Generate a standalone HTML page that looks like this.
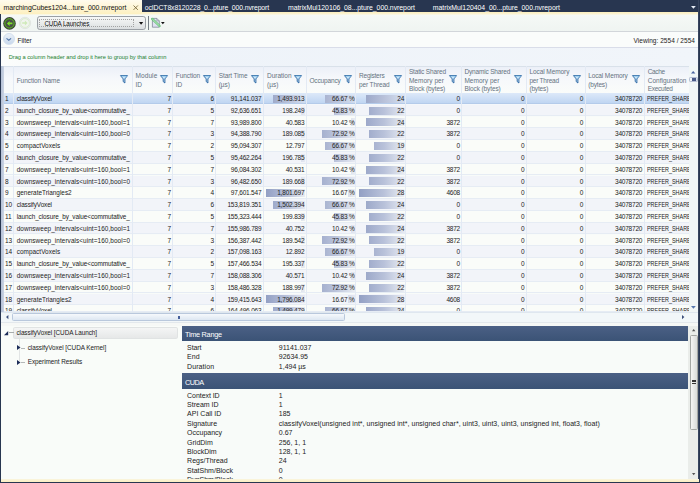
<!DOCTYPE html>
<html><head><meta charset="utf-8"><title>nvreport</title>
<style>
html,body{margin:0;padding:0;}
body{width:700px;height:483px;overflow:hidden;position:relative;background:#f8fbf9;font-family:"Liberation Sans",sans-serif;font-size:6.5px;color:#222;}
div{position:absolute;box-sizing:border-box;white-space:nowrap;}
.t{line-height:10px;height:10px;}
.row{overflow:hidden;}
.row div{top:0;height:11.8px;line-height:11.6px;}
.row .bar{height:8px;top:1.9px;background-image:linear-gradient(90deg,#93a0c4,#b9c2da 55%,rgba(222,227,238,0.55));background-repeat:no-repeat;background-position:right top;}
.vl{top:66.4px;width:0.9px;background:#e3eaf4;}
svg{position:absolute;overflow:visible;}
#w{left:-4px;top:-4px;width:708px;height:491px;background:#283650;}
#c{left:4px;top:4px;width:700px;height:483px;background:#f8fbf9;}
</style></head><body><div id="w"><div id="c">

<div style="left:-4px;top:-4px;width:708px;height:16px;background:#283650"></div>
<div style="left:-4px;top:12px;width:702.7px;height:3px;background:linear-gradient(#fcefbc,#fbf3d2 60%,#f8f9ee)"></div>
<div style="left:-4px;top:-4px;width:145.7px;height:17.5px;background:linear-gradient(#fffbee 4px,#fdf0c0);border-radius:0 2px 0 0"></div>
<div class="t" style="top:2.90px;font-size:6.90px;color:#111;letter-spacing:-0.027px;left:3.60px;">marchingCubes1204...ture_000.nvreport</div>
<svg style="left:133px;top:4.9px" width="5.4" height="5.4" viewBox="0 0 5.4 5.4"><path d="M0.5 0.5L4.9 4.9M4.9 0.5L0.5 4.9" stroke="#7a693c" stroke-width="0.9" fill="none"/></svg>
<div class="t" style="top:2.90px;font-size:6.90px;color:#fff;letter-spacing:-0.128px;left:144.80px;">ocIDCT8x8120228_0...pture_000.nvreport</div>
<div class="t" style="top:2.90px;font-size:6.90px;color:#fff;letter-spacing:-0.038px;left:288.00px;">matrixMul120106_08...pture_000.nvreport</div>
<div class="t" style="top:2.90px;font-size:6.90px;color:#fff;letter-spacing:-0.033px;left:432.80px;">matrixMul120404_00...pture_000.nvreport</div>
<svg style="left:690.5px;top:6.1px" width="4.8" height="2.8" viewBox="0 0 4.8 2.8"><path d="M0 0H4.8L2.4 2.8Z" fill="#e8edf5"/></svg>
<div style="left:1.4px;top:14.6px;width:698px;height:17px;background:linear-gradient(#f5f9f6,#eff4f1)"></div>
<div style="left:1.4px;top:31px;width:698px;height:1px;background:#d2d6da"></div>
<svg style="left:3.4px;top:16.5px" width="13" height="13" viewBox="0 0 13 13"><circle cx="6.5" cy="6.4" r="6.3" fill="#3a3f3a"/><circle cx="6.5" cy="6.4" r="4.7" fill="#494e49" stroke="#5cc01c" stroke-width="1"/><path d="M3.9 6.4 L6.6 3.9 V5.5 H9.4 V7.3 H6.6 V8.9 Z" fill="#7ee02c"/></svg>
<svg style="left:18.5px;top:16.9px" width="12" height="12" viewBox="0 0 12 12"><circle cx="6" cy="6" r="5.7" fill="#e9ede9" stroke="#d9ded9" stroke-width="0.6"/><circle cx="6" cy="6" r="4.4" fill="#f1f4ef" stroke="#d8edc8" stroke-width="0.8"/><path d="M8.6 6 L5.9 3.6 V5.2 H3.2 V6.8 H5.9 V8.4 Z" fill="#cfeab8"/></svg>
<div style="left:37.2px;top:16.3px;width:109.2px;height:13.3px;border:0.8px solid #9a9fa4;border-radius:2.8px;background:linear-gradient(#f6f7f7,#eaecec 50%,#dbdee0)"></div>
<div style="left:39.4px;top:18.7px;width:94.3px;height:8.8px;border:0.6px dotted #a2a2a2"></div>
<div class="t" style="top:19.20px;font-size:6.30px;color:#111;letter-spacing:-0.137px;left:44.40px;">CUDA Launches</div>
<svg style="left:139.4px;top:22.2px" width="4.2" height="2.7" viewBox="0 0 4.2 2.7"><path d="M0 0H4.2L2.1 2.7Z" fill="#111"/></svg>
<div style="left:147.8px;top:15.9px;width:0.8px;height:13.7px;background:#757d84"></div>
<svg style="left:151.9px;top:18.4px" width="8" height="9.6" viewBox="0 0 8 9.6"><path d="M0.4 0.4H4.8L7.3 2.9V9.2H0.4Z" fill="#e0e0f2" stroke="#737d8c" stroke-width="0.7"/><path d="M4.8 0.4V2.9H7.3" fill="none" stroke="#737d8c" stroke-width="0.5"/><path d="M0.2 0.9 L7.6 8" stroke="#67c377" stroke-width="2.3" stroke-linecap="round"/><path d="M0.6 1.3 L7.2 7.6" stroke="#e4f6e6" stroke-width="0.7" stroke-linecap="round"/></svg>
<svg style="left:161px;top:21.9px" width="3.7" height="2.2" viewBox="0 0 3.7 2.2"><path d="M0 0H3.7L1.85 2.2Z" fill="#111"/></svg>
<div style="left:1.4px;top:32.2px;width:698px;height:15px;background:#fafcfb"></div>
<div style="left:1.4px;top:47px;width:698px;height:1px;background:#d9dde9"></div>
<div style="left:3.2px;top:33.3px;width:12px;height:12px;border-radius:6px;background:linear-gradient(#eaf1f9,#c8d8ec);border:0.6px solid #d3dfee"></div>
<svg style="left:6.1px;top:38.1px" width="5.6" height="2.8" viewBox="0 0 5.6 2.8"><path d="M0.5 0.4L2.8 2.3L5.1 0.4" fill="none" stroke="#5275a8" stroke-width="1.1"/></svg>
<div class="t" style="top:35.80px;font-size:6.50px;color:#222;letter-spacing:-0.032px;left:17.50px;">Filter</div>
<div class="t" style="top:35.80px;font-size:6.50px;color:#222;letter-spacing:0.045px;left:633.50px;">Viewing: 2554 / 2554</div>
<div style="left:1.4px;top:47.9px;width:698px;height:18.6px;background:linear-gradient(90deg,#fcfdfc 0,#f5f8fa 10%,#eef3f9 20%,#f1f5fa 100%)"></div>
<div class="t" style="top:52.30px;font-size:5.70px;color:#1a7f2e;letter-spacing:-0.017px;left:8.75px;">Drag a column header and drop it here to group by that column</div>
<div style="left:3.7px;top:66.4px;width:695.3px;height:26.5px;background:linear-gradient(#ecf0f8,#f6f8fb 45%,#fafcfa);border-top:0.8px solid #d9e1ea"></div>
<div class="t" style="top:76.20px;font-size:6.50px;color:#65727f;letter-spacing:-0.063px;left:16.70px;">Function Name</div>
<svg style="left:120.0px;top:74.8px" width="8" height="8.4" viewBox="0 0 8 8.4"><path d="M0.5 0.6H7.5L4.9 3.9V8L3.2 6.6V3.9Z" fill="#cfe7f8" stroke="#1f5f9e" stroke-width="0.9" stroke-linejoin="round"/><path d="M1.5 1.3H6.5L4.4 3.6" fill="none" stroke="#8cc6ec" stroke-width="0.7"/></svg>
<div class="t" style="top:70.80px;font-size:6.50px;color:#65727f;letter-spacing:0.114px;left:135.40px;">Module</div>
<div class="t" style="top:79.50px;font-size:6.50px;color:#65727f;left:135.40px;">ID</div>
<svg style="left:160.0px;top:74.8px" width="8" height="8.4" viewBox="0 0 8 8.4"><path d="M0.5 0.6H7.5L4.9 3.9V8L3.2 6.6V3.9Z" fill="#cfe7f8" stroke="#1f5f9e" stroke-width="0.9" stroke-linejoin="round"/><path d="M1.5 1.3H6.5L4.4 3.6" fill="none" stroke="#8cc6ec" stroke-width="0.7"/></svg>
<div class="t" style="top:70.80px;font-size:6.50px;color:#65727f;letter-spacing:-0.085px;left:175.80px;">Function</div>
<div class="t" style="top:79.50px;font-size:6.50px;color:#65727f;left:175.80px;">ID</div>
<svg style="left:203.0px;top:74.8px" width="8" height="8.4" viewBox="0 0 8 8.4"><path d="M0.5 0.6H7.5L4.9 3.9V8L3.2 6.6V3.9Z" fill="#cfe7f8" stroke="#1f5f9e" stroke-width="0.9" stroke-linejoin="round"/><path d="M1.5 1.3H6.5L4.4 3.6" fill="none" stroke="#8cc6ec" stroke-width="0.7"/></svg>
<div class="t" style="top:70.80px;font-size:6.50px;color:#65727f;letter-spacing:-0.087px;left:218.70px;">Start Time</div>
<div class="t" style="top:79.50px;font-size:6.50px;color:#65727f;left:218.70px;">(µs)</div>
<svg style="left:251.0px;top:74.8px" width="8" height="8.4" viewBox="0 0 8 8.4"><path d="M0.5 0.6H7.5L4.9 3.9V8L3.2 6.6V3.9Z" fill="#cfe7f8" stroke="#1f5f9e" stroke-width="0.9" stroke-linejoin="round"/><path d="M1.5 1.3H6.5L4.4 3.6" fill="none" stroke="#8cc6ec" stroke-width="0.7"/></svg>
<div class="t" style="top:70.80px;font-size:6.50px;color:#65727f;letter-spacing:-0.009px;left:267.00px;">Duration</div>
<div class="t" style="top:79.50px;font-size:6.50px;color:#65727f;left:267.00px;">(µs)</div>
<svg style="left:294.0px;top:74.8px" width="8" height="8.4" viewBox="0 0 8 8.4"><path d="M0.5 0.6H7.5L4.9 3.9V8L3.2 6.6V3.9Z" fill="#cfe7f8" stroke="#1f5f9e" stroke-width="0.9" stroke-linejoin="round"/><path d="M1.5 1.3H6.5L4.4 3.6" fill="none" stroke="#8cc6ec" stroke-width="0.7"/></svg>
<div class="t" style="top:76.20px;font-size:6.50px;color:#65727f;letter-spacing:-0.141px;left:309.40px;">Occupancy</div>
<svg style="left:343.5px;top:74.8px" width="8" height="8.4" viewBox="0 0 8 8.4"><path d="M0.5 0.6H7.5L4.9 3.9V8L3.2 6.6V3.9Z" fill="#cfe7f8" stroke="#1f5f9e" stroke-width="0.9" stroke-linejoin="round"/><path d="M1.5 1.3H6.5L4.4 3.6" fill="none" stroke="#8cc6ec" stroke-width="0.7"/></svg>
<div class="t" style="top:70.80px;font-size:6.50px;color:#65727f;letter-spacing:-0.217px;left:359.00px;">Registers</div>
<div class="t" style="top:79.50px;font-size:6.50px;color:#65727f;letter-spacing:-0.118px;left:359.00px;">per Thread</div>
<svg style="left:393.5px;top:74.8px" width="8" height="8.4" viewBox="0 0 8 8.4"><path d="M0.5 0.6H7.5L4.9 3.9V8L3.2 6.6V3.9Z" fill="#cfe7f8" stroke="#1f5f9e" stroke-width="0.9" stroke-linejoin="round"/><path d="M1.5 1.3H6.5L4.4 3.6" fill="none" stroke="#8cc6ec" stroke-width="0.7"/></svg>
<div class="t" style="top:66.90px;font-size:6.50px;color:#65727f;letter-spacing:-0.156px;left:408.90px;">Static Shared</div>
<div class="t" style="top:75.90px;font-size:6.50px;color:#65727f;letter-spacing:0.033px;left:408.90px;">Memory per</div>
<div class="t" style="top:84.00px;font-size:6.50px;color:#65727f;letter-spacing:-0.101px;left:408.90px;">Block (bytes)</div>
<svg style="left:449.0px;top:74.8px" width="8" height="8.4" viewBox="0 0 8 8.4"><path d="M0.5 0.6H7.5L4.9 3.9V8L3.2 6.6V3.9Z" fill="#cfe7f8" stroke="#1f5f9e" stroke-width="0.9" stroke-linejoin="round"/><path d="M1.5 1.3H6.5L4.4 3.6" fill="none" stroke="#8cc6ec" stroke-width="0.7"/></svg>
<div class="t" style="top:66.90px;font-size:6.50px;color:#65727f;letter-spacing:-0.164px;left:464.40px;">Dynamic Shared</div>
<div class="t" style="top:75.90px;font-size:6.50px;color:#65727f;letter-spacing:0.033px;left:464.40px;">Memory per</div>
<div class="t" style="top:84.00px;font-size:6.50px;color:#65727f;letter-spacing:-0.101px;left:464.40px;">Block (bytes)</div>
<svg style="left:514.0px;top:74.8px" width="8" height="8.4" viewBox="0 0 8 8.4"><path d="M0.5 0.6H7.5L4.9 3.9V8L3.2 6.6V3.9Z" fill="#cfe7f8" stroke="#1f5f9e" stroke-width="0.9" stroke-linejoin="round"/><path d="M1.5 1.3H6.5L4.4 3.6" fill="none" stroke="#8cc6ec" stroke-width="0.7"/></svg>
<div class="t" style="top:66.90px;font-size:6.50px;color:#65727f;letter-spacing:-0.068px;left:529.40px;">Local Memory</div>
<div class="t" style="top:75.90px;font-size:6.50px;color:#65727f;letter-spacing:-0.218px;left:529.40px;">per Thread</div>
<div class="t" style="top:84.00px;font-size:6.50px;color:#65727f;letter-spacing:-0.159px;left:529.40px;">(bytes)</div>
<svg style="left:573.0px;top:74.8px" width="8" height="8.4" viewBox="0 0 8 8.4"><path d="M0.5 0.6H7.5L4.9 3.9V8L3.2 6.6V3.9Z" fill="#cfe7f8" stroke="#1f5f9e" stroke-width="0.9" stroke-linejoin="round"/><path d="M1.5 1.3H6.5L4.4 3.6" fill="none" stroke="#8cc6ec" stroke-width="0.7"/></svg>
<div class="t" style="top:70.80px;font-size:6.50px;color:#65727f;letter-spacing:-0.110px;left:588.20px;">Local Memory</div>
<div class="t" style="top:79.50px;font-size:6.50px;color:#65727f;letter-spacing:-0.159px;left:588.20px;">(bytes)</div>
<svg style="left:632.0px;top:74.8px" width="8" height="8.4" viewBox="0 0 8 8.4"><path d="M0.5 0.6H7.5L4.9 3.9V8L3.2 6.6V3.9Z" fill="#cfe7f8" stroke="#1f5f9e" stroke-width="0.9" stroke-linejoin="round"/><path d="M1.5 1.3H6.5L4.4 3.6" fill="none" stroke="#8cc6ec" stroke-width="0.7"/></svg>
<div class="t" style="top:66.90px;font-size:6.50px;color:#65727f;letter-spacing:-0.358px;left:647.70px;">Cache</div>
<div class="t" style="top:75.90px;font-size:6.50px;color:#65727f;letter-spacing:0.007px;left:647.70px;">Configuration</div>
<div class="t" style="top:84.00px;font-size:6.50px;color:#65727f;letter-spacing:-0.263px;left:647.70px;">Executed</div>
<div style="left:1.4px;top:92.6px;width:687.6px;height:0.8px;background:#a9c3e6"></div>
<div class="row" style="left:1.4px;top:92.90px;width:687.6px;height:11.80px;background:linear-gradient(#dde9f9 0,#bfd5f2 10.2px,#b4cbea 10.2px,#b4cbea 10.8px,#f4f7fb 10.8px);">
<div class="bar" style="left:271.35px;width:32.75px;background-size:39.5px 8px"></div>
<div class="bar" style="left:323.33px;width:30.67px;background-size:46.0px 8px"></div>
<div class="bar" style="left:364.47px;width:38.83px;background-size:45.3px 8px"></div>
<div style="left:3.50px;font-size:6.50px;letter-spacing:-0.108px;">1</div>
<div style="left:15.35px;font-size:6.40px;letter-spacing:-0.107px;">classifyVoxel</div>
<div style="right:518.18px;font-size:6.50px;line-height:11.1px;letter-spacing:-0.217px;">7</div>
<div style="right:475.08px;font-size:6.50px;line-height:11.1px;letter-spacing:-0.217px;">6</div>
<div style="right:427.60px;font-size:6.50px;line-height:11.1px;letter-spacing:-0.195px;">91,141.037</div>
<div style="right:384.61px;font-size:6.50px;line-height:11.1px;letter-spacing:-0.193px;">1,493.913</div>
<div style="right:334.50px;font-size:6.50px;line-height:11.1px;letter-spacing:-0.204px;">66.67 %</div>
<div style="right:284.88px;font-size:6.50px;line-height:11.1px;letter-spacing:-0.217px;">24</div>
<div style="right:228.98px;font-size:6.50px;line-height:11.1px;letter-spacing:-0.217px;">0</div>
<div style="right:164.58px;font-size:6.50px;line-height:11.1px;letter-spacing:-0.217px;">0</div>
<div style="right:105.78px;font-size:6.50px;line-height:11.1px;letter-spacing:-0.217px;">0</div>
<div style="right:46.78px;font-size:6.50px;line-height:11.1px;letter-spacing:-0.217px;">34078720</div>
<div style="left:646.10px;width:41.20px;overflow:hidden"><div style="left:0;font-size:6.5px;transform-origin:0 0;transform:scaleX(0.834)">PREFER_SHARED</div></div>
</div>
<div class="row" style="left:1.4px;top:104.70px;width:687.6px;height:11.80px;background:#f2f4f9;border-bottom:0.7px solid #e6ecf4;">
<div class="bar" style="left:299.75px;width:4.35px;background-size:39.5px 8px"></div>
<div class="bar" style="left:332.92px;width:21.08px;background-size:46.0px 8px"></div>
<div class="bar" style="left:367.71px;width:35.59px;background-size:45.3px 8px"></div>
<div style="left:3.50px;font-size:6.50px;letter-spacing:-0.108px;">2</div>
<div style="left:15.35px;font-size:6.40px;letter-spacing:-0.071px;">launch_closure_by_value&lt;commutative_</div>
<div style="right:518.18px;font-size:6.50px;line-height:11.1px;letter-spacing:-0.217px;">7</div>
<div style="right:475.08px;font-size:6.50px;line-height:11.1px;letter-spacing:-0.217px;">5</div>
<div style="right:427.60px;font-size:6.50px;line-height:11.1px;letter-spacing:-0.195px;">92,636.651</div>
<div style="right:384.60px;font-size:6.50px;line-height:11.1px;letter-spacing:-0.201px;">198.249</div>
<div style="right:334.50px;font-size:6.50px;line-height:11.1px;letter-spacing:-0.204px;">45.83 %</div>
<div style="right:284.88px;font-size:6.50px;line-height:11.1px;letter-spacing:-0.217px;">22</div>
<div style="right:228.98px;font-size:6.50px;line-height:11.1px;letter-spacing:-0.217px;">0</div>
<div style="right:164.58px;font-size:6.50px;line-height:11.1px;letter-spacing:-0.217px;">0</div>
<div style="right:105.78px;font-size:6.50px;line-height:11.1px;letter-spacing:-0.217px;">0</div>
<div style="right:46.78px;font-size:6.50px;line-height:11.1px;letter-spacing:-0.217px;">34078720</div>
<div style="left:646.10px;width:41.20px;overflow:hidden"><div style="left:0;font-size:6.5px;transform-origin:0 0;transform:scaleX(0.834)">PREFER_SHARED</div></div>
</div>
<div class="row" style="left:1.4px;top:116.50px;width:687.6px;height:11.80px;background:#fafcf9;border-bottom:0.7px solid #e6ecf4;">
<div class="bar" style="left:303.21px;width:0.89px;background-size:39.5px 8px"></div>
<div class="bar" style="left:349.21px;width:4.79px;background-size:46.0px 8px"></div>
<div class="bar" style="left:364.47px;width:38.83px;background-size:45.3px 8px"></div>
<div style="left:3.50px;font-size:6.50px;letter-spacing:-0.108px;">3</div>
<div style="left:15.35px;font-size:6.40px;letter-spacing:0.076px;">downsweep_intervals&lt;uint=160,bool=1</div>
<div style="right:518.18px;font-size:6.50px;line-height:11.1px;letter-spacing:-0.217px;">7</div>
<div style="right:475.08px;font-size:6.50px;line-height:11.1px;letter-spacing:-0.217px;">7</div>
<div style="right:427.60px;font-size:6.50px;line-height:11.1px;letter-spacing:-0.195px;">93,989.800</div>
<div style="right:384.60px;font-size:6.50px;line-height:11.1px;letter-spacing:-0.199px;">40.583</div>
<div style="right:334.50px;font-size:6.50px;line-height:11.1px;letter-spacing:-0.204px;">10.42 %</div>
<div style="right:284.88px;font-size:6.50px;line-height:11.1px;letter-spacing:-0.217px;">24</div>
<div style="right:228.98px;font-size:6.50px;line-height:11.1px;letter-spacing:-0.217px;">3872</div>
<div style="right:164.58px;font-size:6.50px;line-height:11.1px;letter-spacing:-0.217px;">0</div>
<div style="right:105.78px;font-size:6.50px;line-height:11.1px;letter-spacing:-0.217px;">0</div>
<div style="right:46.78px;font-size:6.50px;line-height:11.1px;letter-spacing:-0.217px;">34078720</div>
<div style="left:646.10px;width:41.20px;overflow:hidden"><div style="left:0;font-size:6.5px;transform-origin:0 0;transform:scaleX(0.834)">PREFER_SHARED</div></div>
</div>
<div class="row" style="left:1.4px;top:128.30px;width:687.6px;height:11.80px;background:#f2f4f9;border-bottom:0.7px solid #e6ecf4;">
<div class="bar" style="left:299.95px;width:4.15px;background-size:39.5px 8px"></div>
<div class="bar" style="left:320.46px;width:33.54px;background-size:46.0px 8px"></div>
<div class="bar" style="left:367.71px;width:35.59px;background-size:45.3px 8px"></div>
<div style="left:3.50px;font-size:6.50px;letter-spacing:-0.108px;">4</div>
<div style="left:15.35px;font-size:6.40px;letter-spacing:0.076px;">downsweep_intervals&lt;uint=160,bool=0</div>
<div style="right:518.18px;font-size:6.50px;line-height:11.1px;letter-spacing:-0.217px;">7</div>
<div style="right:475.08px;font-size:6.50px;line-height:11.1px;letter-spacing:-0.217px;">3</div>
<div style="right:427.60px;font-size:6.50px;line-height:11.1px;letter-spacing:-0.195px;">94,388.790</div>
<div style="right:384.60px;font-size:6.50px;line-height:11.1px;letter-spacing:-0.201px;">189.085</div>
<div style="right:334.50px;font-size:6.50px;line-height:11.1px;letter-spacing:-0.204px;">72.92 %</div>
<div style="right:284.88px;font-size:6.50px;line-height:11.1px;letter-spacing:-0.217px;">22</div>
<div style="right:228.98px;font-size:6.50px;line-height:11.1px;letter-spacing:-0.217px;">3872</div>
<div style="right:164.58px;font-size:6.50px;line-height:11.1px;letter-spacing:-0.217px;">0</div>
<div style="right:105.78px;font-size:6.50px;line-height:11.1px;letter-spacing:-0.217px;">0</div>
<div style="right:46.78px;font-size:6.50px;line-height:11.1px;letter-spacing:-0.217px;">34078720</div>
<div style="left:646.10px;width:41.20px;overflow:hidden"><div style="left:0;font-size:6.5px;transform-origin:0 0;transform:scaleX(0.834)">PREFER_SHARED</div></div>
</div>
<div class="row" style="left:1.4px;top:140.10px;width:687.6px;height:11.80px;background:#fafcf9;border-bottom:0.7px solid #e6ecf4;">
<div class="bar" style="left:303.82px;width:0.28px;background-size:39.5px 8px"></div>
<div class="bar" style="left:323.33px;width:30.67px;background-size:46.0px 8px"></div>
<div class="bar" style="left:372.56px;width:30.74px;background-size:45.3px 8px"></div>
<div style="left:3.50px;font-size:6.50px;letter-spacing:-0.108px;">5</div>
<div style="left:15.35px;font-size:6.40px;letter-spacing:0.035px;">compactVoxels</div>
<div style="right:518.18px;font-size:6.50px;line-height:11.1px;letter-spacing:-0.217px;">7</div>
<div style="right:475.08px;font-size:6.50px;line-height:11.1px;letter-spacing:-0.217px;">2</div>
<div style="right:427.60px;font-size:6.50px;line-height:11.1px;letter-spacing:-0.195px;">95,094.307</div>
<div style="right:384.60px;font-size:6.50px;line-height:11.1px;letter-spacing:-0.199px;">12.797</div>
<div style="right:334.50px;font-size:6.50px;line-height:11.1px;letter-spacing:-0.204px;">66.67 %</div>
<div style="right:284.88px;font-size:6.50px;line-height:11.1px;letter-spacing:-0.217px;">19</div>
<div style="right:228.98px;font-size:6.50px;line-height:11.1px;letter-spacing:-0.217px;">0</div>
<div style="right:164.58px;font-size:6.50px;line-height:11.1px;letter-spacing:-0.217px;">0</div>
<div style="right:105.78px;font-size:6.50px;line-height:11.1px;letter-spacing:-0.217px;">0</div>
<div style="right:46.78px;font-size:6.50px;line-height:11.1px;letter-spacing:-0.217px;">34078720</div>
<div style="left:646.10px;width:41.20px;overflow:hidden"><div style="left:0;font-size:6.5px;transform-origin:0 0;transform:scaleX(0.834)">PREFER_SHARED</div></div>
</div>
<div class="row" style="left:1.4px;top:151.90px;width:687.6px;height:11.80px;background:#f2f4f9;border-bottom:0.7px solid #e6ecf4;">
<div class="bar" style="left:299.79px;width:4.31px;background-size:39.5px 8px"></div>
<div class="bar" style="left:332.92px;width:21.08px;background-size:46.0px 8px"></div>
<div class="bar" style="left:367.71px;width:35.59px;background-size:45.3px 8px"></div>
<div style="left:3.50px;font-size:6.50px;letter-spacing:-0.108px;">6</div>
<div style="left:15.35px;font-size:6.40px;letter-spacing:-0.071px;">launch_closure_by_value&lt;commutative_</div>
<div style="right:518.18px;font-size:6.50px;line-height:11.1px;letter-spacing:-0.217px;">7</div>
<div style="right:475.08px;font-size:6.50px;line-height:11.1px;letter-spacing:-0.217px;">5</div>
<div style="right:427.60px;font-size:6.50px;line-height:11.1px;letter-spacing:-0.195px;">95,462.264</div>
<div style="right:384.60px;font-size:6.50px;line-height:11.1px;letter-spacing:-0.201px;">196.785</div>
<div style="right:334.50px;font-size:6.50px;line-height:11.1px;letter-spacing:-0.204px;">45.83 %</div>
<div style="right:284.88px;font-size:6.50px;line-height:11.1px;letter-spacing:-0.217px;">22</div>
<div style="right:228.98px;font-size:6.50px;line-height:11.1px;letter-spacing:-0.217px;">0</div>
<div style="right:164.58px;font-size:6.50px;line-height:11.1px;letter-spacing:-0.217px;">0</div>
<div style="right:105.78px;font-size:6.50px;line-height:11.1px;letter-spacing:-0.217px;">0</div>
<div style="right:46.78px;font-size:6.50px;line-height:11.1px;letter-spacing:-0.217px;">34078720</div>
<div style="left:646.10px;width:41.20px;overflow:hidden"><div style="left:0;font-size:6.5px;transform-origin:0 0;transform:scaleX(0.834)">PREFER_SHARED</div></div>
</div>
<div class="row" style="left:1.4px;top:163.70px;width:687.6px;height:11.80px;background:#fafcf9;border-bottom:0.7px solid #e6ecf4;">
<div class="bar" style="left:303.21px;width:0.89px;background-size:39.5px 8px"></div>
<div class="bar" style="left:349.21px;width:4.79px;background-size:46.0px 8px"></div>
<div class="bar" style="left:364.47px;width:38.83px;background-size:45.3px 8px"></div>
<div style="left:3.50px;font-size:6.50px;letter-spacing:-0.108px;">7</div>
<div style="left:15.35px;font-size:6.40px;letter-spacing:0.076px;">downsweep_intervals&lt;uint=160,bool=1</div>
<div style="right:518.18px;font-size:6.50px;line-height:11.1px;letter-spacing:-0.217px;">7</div>
<div style="right:475.08px;font-size:6.50px;line-height:11.1px;letter-spacing:-0.217px;">7</div>
<div style="right:427.60px;font-size:6.50px;line-height:11.1px;letter-spacing:-0.195px;">96,084.302</div>
<div style="right:384.60px;font-size:6.50px;line-height:11.1px;letter-spacing:-0.199px;">40.531</div>
<div style="right:334.50px;font-size:6.50px;line-height:11.1px;letter-spacing:-0.204px;">10.42 %</div>
<div style="right:284.88px;font-size:6.50px;line-height:11.1px;letter-spacing:-0.217px;">24</div>
<div style="right:228.98px;font-size:6.50px;line-height:11.1px;letter-spacing:-0.217px;">3872</div>
<div style="right:164.58px;font-size:6.50px;line-height:11.1px;letter-spacing:-0.217px;">0</div>
<div style="right:105.78px;font-size:6.50px;line-height:11.1px;letter-spacing:-0.217px;">0</div>
<div style="right:46.78px;font-size:6.50px;line-height:11.1px;letter-spacing:-0.217px;">34078720</div>
<div style="left:646.10px;width:41.20px;overflow:hidden"><div style="left:0;font-size:6.5px;transform-origin:0 0;transform:scaleX(0.834)">PREFER_SHARED</div></div>
</div>
<div class="row" style="left:1.4px;top:175.50px;width:687.6px;height:11.80px;background:#f2f4f9;border-bottom:0.7px solid #e6ecf4;">
<div class="bar" style="left:299.94px;width:4.16px;background-size:39.5px 8px"></div>
<div class="bar" style="left:320.46px;width:33.54px;background-size:46.0px 8px"></div>
<div class="bar" style="left:367.71px;width:35.59px;background-size:45.3px 8px"></div>
<div style="left:3.50px;font-size:6.50px;letter-spacing:-0.108px;">8</div>
<div style="left:15.35px;font-size:6.40px;letter-spacing:0.076px;">downsweep_intervals&lt;uint=160,bool=0</div>
<div style="right:518.18px;font-size:6.50px;line-height:11.1px;letter-spacing:-0.217px;">7</div>
<div style="right:475.08px;font-size:6.50px;line-height:11.1px;letter-spacing:-0.217px;">3</div>
<div style="right:427.60px;font-size:6.50px;line-height:11.1px;letter-spacing:-0.195px;">96,482.650</div>
<div style="right:384.60px;font-size:6.50px;line-height:11.1px;letter-spacing:-0.201px;">189.668</div>
<div style="right:334.50px;font-size:6.50px;line-height:11.1px;letter-spacing:-0.204px;">72.92 %</div>
<div style="right:284.88px;font-size:6.50px;line-height:11.1px;letter-spacing:-0.217px;">22</div>
<div style="right:228.98px;font-size:6.50px;line-height:11.1px;letter-spacing:-0.217px;">3872</div>
<div style="right:164.58px;font-size:6.50px;line-height:11.1px;letter-spacing:-0.217px;">0</div>
<div style="right:105.78px;font-size:6.50px;line-height:11.1px;letter-spacing:-0.217px;">0</div>
<div style="right:46.78px;font-size:6.50px;line-height:11.1px;letter-spacing:-0.217px;">34078720</div>
<div style="left:646.10px;width:41.20px;overflow:hidden"><div style="left:0;font-size:6.5px;transform-origin:0 0;transform:scaleX(0.834)">PREFER_SHARED</div></div>
</div>
<div class="row" style="left:1.4px;top:187.30px;width:687.6px;height:11.80px;background:#fafcf9;border-bottom:0.7px solid #e6ecf4;">
<div class="bar" style="left:264.60px;width:39.50px;background-size:39.5px 8px"></div>
<div class="bar" style="left:346.33px;width:7.67px;background-size:46.0px 8px"></div>
<div class="bar" style="left:358.00px;width:45.30px;background-size:45.3px 8px"></div>
<div style="left:3.50px;font-size:6.50px;letter-spacing:-0.108px;">9</div>
<div style="left:15.35px;font-size:6.40px;letter-spacing:0.005px;">generateTriangles2</div>
<div style="right:518.18px;font-size:6.50px;line-height:11.1px;letter-spacing:-0.217px;">7</div>
<div style="right:475.08px;font-size:6.50px;line-height:11.1px;letter-spacing:-0.217px;">4</div>
<div style="right:427.60px;font-size:6.50px;line-height:11.1px;letter-spacing:-0.195px;">97,601.547</div>
<div style="right:384.61px;font-size:6.50px;line-height:11.1px;letter-spacing:-0.193px;">1,801.697</div>
<div style="right:334.50px;font-size:6.50px;line-height:11.1px;letter-spacing:-0.204px;">16.67 %</div>
<div style="right:284.88px;font-size:6.50px;line-height:11.1px;letter-spacing:-0.217px;">28</div>
<div style="right:228.98px;font-size:6.50px;line-height:11.1px;letter-spacing:-0.217px;">4608</div>
<div style="right:164.58px;font-size:6.50px;line-height:11.1px;letter-spacing:-0.217px;">0</div>
<div style="right:105.78px;font-size:6.50px;line-height:11.1px;letter-spacing:-0.217px;">0</div>
<div style="right:46.78px;font-size:6.50px;line-height:11.1px;letter-spacing:-0.217px;">34078720</div>
<div style="left:646.10px;width:41.20px;overflow:hidden"><div style="left:0;font-size:6.5px;transform-origin:0 0;transform:scaleX(0.834)">PREFER_SHARED</div></div>
</div>
<div class="row" style="left:1.4px;top:199.10px;width:687.6px;height:11.80px;background:#f2f4f9;border-bottom:0.7px solid #e6ecf4;">
<div class="bar" style="left:271.16px;width:32.94px;background-size:39.5px 8px"></div>
<div class="bar" style="left:323.33px;width:30.67px;background-size:46.0px 8px"></div>
<div class="bar" style="left:364.47px;width:38.83px;background-size:45.3px 8px"></div>
<div style="left:3.50px;font-size:6.50px;letter-spacing:-0.108px;">10</div>
<div style="left:15.35px;font-size:6.40px;letter-spacing:-0.107px;">classifyVoxel</div>
<div style="right:518.18px;font-size:6.50px;line-height:11.1px;letter-spacing:-0.217px;">7</div>
<div style="right:475.08px;font-size:6.50px;line-height:11.1px;letter-spacing:-0.217px;">6</div>
<div style="right:427.60px;font-size:6.50px;line-height:11.1px;letter-spacing:-0.197px;">153,819.351</div>
<div style="right:384.61px;font-size:6.50px;line-height:11.1px;letter-spacing:-0.193px;">1,502.394</div>
<div style="right:334.50px;font-size:6.50px;line-height:11.1px;letter-spacing:-0.204px;">66.67 %</div>
<div style="right:284.88px;font-size:6.50px;line-height:11.1px;letter-spacing:-0.217px;">24</div>
<div style="right:228.98px;font-size:6.50px;line-height:11.1px;letter-spacing:-0.217px;">0</div>
<div style="right:164.58px;font-size:6.50px;line-height:11.1px;letter-spacing:-0.217px;">0</div>
<div style="right:105.78px;font-size:6.50px;line-height:11.1px;letter-spacing:-0.217px;">0</div>
<div style="right:46.78px;font-size:6.50px;line-height:11.1px;letter-spacing:-0.217px;">34078720</div>
<div style="left:646.10px;width:41.20px;overflow:hidden"><div style="left:0;font-size:6.5px;transform-origin:0 0;transform:scaleX(0.834)">PREFER_SHARED</div></div>
</div>
<div class="row" style="left:1.4px;top:210.90px;width:687.6px;height:11.80px;background:#fafcf9;border-bottom:0.7px solid #e6ecf4;">
<div class="bar" style="left:299.72px;width:4.38px;background-size:39.5px 8px"></div>
<div class="bar" style="left:332.92px;width:21.08px;background-size:46.0px 8px"></div>
<div class="bar" style="left:367.71px;width:35.59px;background-size:45.3px 8px"></div>
<div style="left:3.50px;font-size:6.50px;letter-spacing:-0.101px;">11</div>
<div style="left:15.35px;font-size:6.40px;letter-spacing:-0.071px;">launch_closure_by_value&lt;commutative_</div>
<div style="right:518.18px;font-size:6.50px;line-height:11.1px;letter-spacing:-0.217px;">7</div>
<div style="right:475.08px;font-size:6.50px;line-height:11.1px;letter-spacing:-0.217px;">5</div>
<div style="right:427.60px;font-size:6.50px;line-height:11.1px;letter-spacing:-0.197px;">155,323.444</div>
<div style="right:384.60px;font-size:6.50px;line-height:11.1px;letter-spacing:-0.201px;">199.839</div>
<div style="right:334.50px;font-size:6.50px;line-height:11.1px;letter-spacing:-0.204px;">45.83 %</div>
<div style="right:284.88px;font-size:6.50px;line-height:11.1px;letter-spacing:-0.217px;">22</div>
<div style="right:228.98px;font-size:6.50px;line-height:11.1px;letter-spacing:-0.217px;">0</div>
<div style="right:164.58px;font-size:6.50px;line-height:11.1px;letter-spacing:-0.217px;">0</div>
<div style="right:105.78px;font-size:6.50px;line-height:11.1px;letter-spacing:-0.217px;">0</div>
<div style="right:46.78px;font-size:6.50px;line-height:11.1px;letter-spacing:-0.217px;">34078720</div>
<div style="left:646.10px;width:41.20px;overflow:hidden"><div style="left:0;font-size:6.5px;transform-origin:0 0;transform:scaleX(0.834)">PREFER_SHARED</div></div>
</div>
<div class="row" style="left:1.4px;top:222.70px;width:687.6px;height:11.80px;background:#f2f4f9;border-bottom:0.7px solid #e6ecf4;">
<div class="bar" style="left:303.21px;width:0.89px;background-size:39.5px 8px"></div>
<div class="bar" style="left:349.21px;width:4.79px;background-size:46.0px 8px"></div>
<div class="bar" style="left:364.47px;width:38.83px;background-size:45.3px 8px"></div>
<div style="left:3.50px;font-size:6.50px;letter-spacing:-0.108px;">12</div>
<div style="left:15.35px;font-size:6.40px;letter-spacing:0.076px;">downsweep_intervals&lt;uint=160,bool=1</div>
<div style="right:518.18px;font-size:6.50px;line-height:11.1px;letter-spacing:-0.217px;">7</div>
<div style="right:475.08px;font-size:6.50px;line-height:11.1px;letter-spacing:-0.217px;">7</div>
<div style="right:427.60px;font-size:6.50px;line-height:11.1px;letter-spacing:-0.197px;">155,986.789</div>
<div style="right:384.60px;font-size:6.50px;line-height:11.1px;letter-spacing:-0.199px;">40.752</div>
<div style="right:334.50px;font-size:6.50px;line-height:11.1px;letter-spacing:-0.204px;">10.42 %</div>
<div style="right:284.88px;font-size:6.50px;line-height:11.1px;letter-spacing:-0.217px;">24</div>
<div style="right:228.98px;font-size:6.50px;line-height:11.1px;letter-spacing:-0.217px;">3872</div>
<div style="right:164.58px;font-size:6.50px;line-height:11.1px;letter-spacing:-0.217px;">0</div>
<div style="right:105.78px;font-size:6.50px;line-height:11.1px;letter-spacing:-0.217px;">0</div>
<div style="right:46.78px;font-size:6.50px;line-height:11.1px;letter-spacing:-0.217px;">34078720</div>
<div style="left:646.10px;width:41.20px;overflow:hidden"><div style="left:0;font-size:6.5px;transform-origin:0 0;transform:scaleX(0.834)">PREFER_SHARED</div></div>
</div>
<div class="row" style="left:1.4px;top:234.50px;width:687.6px;height:11.80px;background:#fafcf9;border-bottom:0.7px solid #e6ecf4;">
<div class="bar" style="left:299.94px;width:4.16px;background-size:39.5px 8px"></div>
<div class="bar" style="left:320.46px;width:33.54px;background-size:46.0px 8px"></div>
<div class="bar" style="left:367.71px;width:35.59px;background-size:45.3px 8px"></div>
<div style="left:3.50px;font-size:6.50px;letter-spacing:-0.108px;">13</div>
<div style="left:15.35px;font-size:6.40px;letter-spacing:0.076px;">downsweep_intervals&lt;uint=160,bool=0</div>
<div style="right:518.18px;font-size:6.50px;line-height:11.1px;letter-spacing:-0.217px;">7</div>
<div style="right:475.08px;font-size:6.50px;line-height:11.1px;letter-spacing:-0.217px;">3</div>
<div style="right:427.60px;font-size:6.50px;line-height:11.1px;letter-spacing:-0.197px;">156,387.442</div>
<div style="right:384.60px;font-size:6.50px;line-height:11.1px;letter-spacing:-0.201px;">189.542</div>
<div style="right:334.50px;font-size:6.50px;line-height:11.1px;letter-spacing:-0.204px;">72.92 %</div>
<div style="right:284.88px;font-size:6.50px;line-height:11.1px;letter-spacing:-0.217px;">22</div>
<div style="right:228.98px;font-size:6.50px;line-height:11.1px;letter-spacing:-0.217px;">3872</div>
<div style="right:164.58px;font-size:6.50px;line-height:11.1px;letter-spacing:-0.217px;">0</div>
<div style="right:105.78px;font-size:6.50px;line-height:11.1px;letter-spacing:-0.217px;">0</div>
<div style="right:46.78px;font-size:6.50px;line-height:11.1px;letter-spacing:-0.217px;">34078720</div>
<div style="left:646.10px;width:41.20px;overflow:hidden"><div style="left:0;font-size:6.5px;transform-origin:0 0;transform:scaleX(0.834)">PREFER_SHARED</div></div>
</div>
<div class="row" style="left:1.4px;top:246.30px;width:687.6px;height:11.80px;background:#f2f4f9;border-bottom:0.7px solid #e6ecf4;">
<div class="bar" style="left:303.82px;width:0.28px;background-size:39.5px 8px"></div>
<div class="bar" style="left:323.33px;width:30.67px;background-size:46.0px 8px"></div>
<div class="bar" style="left:372.56px;width:30.74px;background-size:45.3px 8px"></div>
<div style="left:3.50px;font-size:6.50px;letter-spacing:-0.108px;">14</div>
<div style="left:15.35px;font-size:6.40px;letter-spacing:0.035px;">compactVoxels</div>
<div style="right:518.18px;font-size:6.50px;line-height:11.1px;letter-spacing:-0.217px;">7</div>
<div style="right:475.08px;font-size:6.50px;line-height:11.1px;letter-spacing:-0.217px;">2</div>
<div style="right:427.60px;font-size:6.50px;line-height:11.1px;letter-spacing:-0.197px;">157,098.163</div>
<div style="right:384.60px;font-size:6.50px;line-height:11.1px;letter-spacing:-0.199px;">12.892</div>
<div style="right:334.50px;font-size:6.50px;line-height:11.1px;letter-spacing:-0.204px;">66.67 %</div>
<div style="right:284.88px;font-size:6.50px;line-height:11.1px;letter-spacing:-0.217px;">19</div>
<div style="right:228.98px;font-size:6.50px;line-height:11.1px;letter-spacing:-0.217px;">0</div>
<div style="right:164.58px;font-size:6.50px;line-height:11.1px;letter-spacing:-0.217px;">0</div>
<div style="right:105.78px;font-size:6.50px;line-height:11.1px;letter-spacing:-0.217px;">0</div>
<div style="right:46.78px;font-size:6.50px;line-height:11.1px;letter-spacing:-0.217px;">34078720</div>
<div style="left:646.10px;width:41.20px;overflow:hidden"><div style="left:0;font-size:6.5px;transform-origin:0 0;transform:scaleX(0.834)">PREFER_SHARED</div></div>
</div>
<div class="row" style="left:1.4px;top:258.10px;width:687.6px;height:11.80px;background:#fafcf9;border-bottom:0.7px solid #e6ecf4;">
<div class="bar" style="left:299.82px;width:4.28px;background-size:39.5px 8px"></div>
<div class="bar" style="left:332.92px;width:21.08px;background-size:46.0px 8px"></div>
<div class="bar" style="left:367.71px;width:35.59px;background-size:45.3px 8px"></div>
<div style="left:3.50px;font-size:6.50px;letter-spacing:-0.108px;">15</div>
<div style="left:15.35px;font-size:6.40px;letter-spacing:-0.071px;">launch_closure_by_value&lt;commutative_</div>
<div style="right:518.18px;font-size:6.50px;line-height:11.1px;letter-spacing:-0.217px;">7</div>
<div style="right:475.08px;font-size:6.50px;line-height:11.1px;letter-spacing:-0.217px;">5</div>
<div style="right:427.60px;font-size:6.50px;line-height:11.1px;letter-spacing:-0.197px;">157,466.534</div>
<div style="right:384.60px;font-size:6.50px;line-height:11.1px;letter-spacing:-0.201px;">195.337</div>
<div style="right:334.50px;font-size:6.50px;line-height:11.1px;letter-spacing:-0.204px;">45.83 %</div>
<div style="right:284.88px;font-size:6.50px;line-height:11.1px;letter-spacing:-0.217px;">22</div>
<div style="right:228.98px;font-size:6.50px;line-height:11.1px;letter-spacing:-0.217px;">0</div>
<div style="right:164.58px;font-size:6.50px;line-height:11.1px;letter-spacing:-0.217px;">0</div>
<div style="right:105.78px;font-size:6.50px;line-height:11.1px;letter-spacing:-0.217px;">0</div>
<div style="right:46.78px;font-size:6.50px;line-height:11.1px;letter-spacing:-0.217px;">34078720</div>
<div style="left:646.10px;width:41.20px;overflow:hidden"><div style="left:0;font-size:6.5px;transform-origin:0 0;transform:scaleX(0.834)">PREFER_SHARED</div></div>
</div>
<div class="row" style="left:1.4px;top:269.90px;width:687.6px;height:11.80px;background:#f2f4f9;border-bottom:0.7px solid #e6ecf4;">
<div class="bar" style="left:303.21px;width:0.89px;background-size:39.5px 8px"></div>
<div class="bar" style="left:349.21px;width:4.79px;background-size:46.0px 8px"></div>
<div class="bar" style="left:364.47px;width:38.83px;background-size:45.3px 8px"></div>
<div style="left:3.50px;font-size:6.50px;letter-spacing:-0.108px;">16</div>
<div style="left:15.35px;font-size:6.40px;letter-spacing:0.076px;">downsweep_intervals&lt;uint=160,bool=1</div>
<div style="right:518.18px;font-size:6.50px;line-height:11.1px;letter-spacing:-0.217px;">7</div>
<div style="right:475.08px;font-size:6.50px;line-height:11.1px;letter-spacing:-0.217px;">7</div>
<div style="right:427.60px;font-size:6.50px;line-height:11.1px;letter-spacing:-0.197px;">158,088.306</div>
<div style="right:384.60px;font-size:6.50px;line-height:11.1px;letter-spacing:-0.199px;">40.571</div>
<div style="right:334.50px;font-size:6.50px;line-height:11.1px;letter-spacing:-0.204px;">10.42 %</div>
<div style="right:284.88px;font-size:6.50px;line-height:11.1px;letter-spacing:-0.217px;">24</div>
<div style="right:228.98px;font-size:6.50px;line-height:11.1px;letter-spacing:-0.217px;">3872</div>
<div style="right:164.58px;font-size:6.50px;line-height:11.1px;letter-spacing:-0.217px;">0</div>
<div style="right:105.78px;font-size:6.50px;line-height:11.1px;letter-spacing:-0.217px;">0</div>
<div style="right:46.78px;font-size:6.50px;line-height:11.1px;letter-spacing:-0.217px;">34078720</div>
<div style="left:646.10px;width:41.20px;overflow:hidden"><div style="left:0;font-size:6.5px;transform-origin:0 0;transform:scaleX(0.834)">PREFER_SHARED</div></div>
</div>
<div class="row" style="left:1.4px;top:281.70px;width:687.6px;height:11.80px;background:#fafcf9;border-bottom:0.7px solid #e6ecf4;">
<div class="bar" style="left:299.96px;width:4.14px;background-size:39.5px 8px"></div>
<div class="bar" style="left:320.46px;width:33.54px;background-size:46.0px 8px"></div>
<div class="bar" style="left:367.71px;width:35.59px;background-size:45.3px 8px"></div>
<div style="left:3.50px;font-size:6.50px;letter-spacing:-0.108px;">17</div>
<div style="left:15.35px;font-size:6.40px;letter-spacing:0.076px;">downsweep_intervals&lt;uint=160,bool=0</div>
<div style="right:518.18px;font-size:6.50px;line-height:11.1px;letter-spacing:-0.217px;">7</div>
<div style="right:475.08px;font-size:6.50px;line-height:11.1px;letter-spacing:-0.217px;">3</div>
<div style="right:427.60px;font-size:6.50px;line-height:11.1px;letter-spacing:-0.197px;">158,486.328</div>
<div style="right:384.60px;font-size:6.50px;line-height:11.1px;letter-spacing:-0.201px;">188.997</div>
<div style="right:334.50px;font-size:6.50px;line-height:11.1px;letter-spacing:-0.204px;">72.92 %</div>
<div style="right:284.88px;font-size:6.50px;line-height:11.1px;letter-spacing:-0.217px;">22</div>
<div style="right:228.98px;font-size:6.50px;line-height:11.1px;letter-spacing:-0.217px;">3872</div>
<div style="right:164.58px;font-size:6.50px;line-height:11.1px;letter-spacing:-0.217px;">0</div>
<div style="right:105.78px;font-size:6.50px;line-height:11.1px;letter-spacing:-0.217px;">0</div>
<div style="right:46.78px;font-size:6.50px;line-height:11.1px;letter-spacing:-0.217px;">34078720</div>
<div style="left:646.10px;width:41.20px;overflow:hidden"><div style="left:0;font-size:6.5px;transform-origin:0 0;transform:scaleX(0.834)">PREFER_SHARED</div></div>
</div>
<div class="row" style="left:1.4px;top:293.50px;width:687.6px;height:11.80px;background:#f2f4f9;border-bottom:0.7px solid #e6ecf4;">
<div class="bar" style="left:264.72px;width:39.38px;background-size:39.5px 8px"></div>
<div class="bar" style="left:346.33px;width:7.67px;background-size:46.0px 8px"></div>
<div class="bar" style="left:358.00px;width:45.30px;background-size:45.3px 8px"></div>
<div style="left:3.50px;font-size:6.50px;letter-spacing:-0.108px;">18</div>
<div style="left:15.35px;font-size:6.40px;letter-spacing:0.005px;">generateTriangles2</div>
<div style="right:518.18px;font-size:6.50px;line-height:11.1px;letter-spacing:-0.217px;">7</div>
<div style="right:475.08px;font-size:6.50px;line-height:11.1px;letter-spacing:-0.217px;">4</div>
<div style="right:427.60px;font-size:6.50px;line-height:11.1px;letter-spacing:-0.197px;">159,415.643</div>
<div style="right:384.61px;font-size:6.50px;line-height:11.1px;letter-spacing:-0.193px;">1,796.084</div>
<div style="right:334.50px;font-size:6.50px;line-height:11.1px;letter-spacing:-0.204px;">16.67 %</div>
<div style="right:284.88px;font-size:6.50px;line-height:11.1px;letter-spacing:-0.217px;">28</div>
<div style="right:228.98px;font-size:6.50px;line-height:11.1px;letter-spacing:-0.217px;">4608</div>
<div style="right:164.58px;font-size:6.50px;line-height:11.1px;letter-spacing:-0.217px;">0</div>
<div style="right:105.78px;font-size:6.50px;line-height:11.1px;letter-spacing:-0.217px;">0</div>
<div style="right:46.78px;font-size:6.50px;line-height:11.1px;letter-spacing:-0.217px;">34078720</div>
<div style="left:646.10px;width:41.20px;overflow:hidden"><div style="left:0;font-size:6.5px;transform-origin:0 0;transform:scaleX(0.834)">PREFER_SHARED</div></div>
</div>
<div class="row" style="left:1.4px;top:305.30px;width:687.6px;height:7.10px;background:#fafcf9;border-bottom:0.7px solid #e6ecf4;">
<div class="bar" style="left:271.23px;width:32.87px;background-size:39.5px 8px"></div>
<div class="bar" style="left:323.33px;width:30.67px;background-size:46.0px 8px"></div>
<div class="bar" style="left:364.47px;width:38.83px;background-size:45.3px 8px"></div>
<div style="left:3.50px;font-size:6.50px;letter-spacing:-0.108px;">19</div>
<div style="left:15.35px;font-size:6.40px;letter-spacing:-0.107px;">classifyVoxel</div>
<div style="right:518.18px;font-size:6.50px;line-height:11.1px;letter-spacing:-0.217px;">7</div>
<div style="right:475.08px;font-size:6.50px;line-height:11.1px;letter-spacing:-0.217px;">6</div>
<div style="right:427.60px;font-size:6.50px;line-height:11.1px;letter-spacing:-0.197px;">164,496.063</div>
<div style="right:384.61px;font-size:6.50px;line-height:11.1px;letter-spacing:-0.193px;">1,499.479</div>
<div style="right:334.50px;font-size:6.50px;line-height:11.1px;letter-spacing:-0.204px;">66.67 %</div>
<div style="right:284.88px;font-size:6.50px;line-height:11.1px;letter-spacing:-0.217px;">24</div>
<div style="right:228.98px;font-size:6.50px;line-height:11.1px;letter-spacing:-0.217px;">0</div>
<div style="right:164.58px;font-size:6.50px;line-height:11.1px;letter-spacing:-0.217px;">0</div>
<div style="right:105.78px;font-size:6.50px;line-height:11.1px;letter-spacing:-0.217px;">0</div>
<div style="right:46.78px;font-size:6.50px;line-height:11.1px;letter-spacing:-0.217px;">34078720</div>
<div style="left:646.10px;width:41.20px;overflow:hidden"><div style="left:0;font-size:6.5px;transform-origin:0 0;transform:scaleX(0.834)">PREFER_SHARED</div></div>
</div>
<div class="vl" style="left:13.1px;height:246.0px"></div>
<div class="vl" style="left:131.8px;height:246.0px"></div>
<div class="vl" style="left:172.2px;height:246.0px"></div>
<div class="vl" style="left:215.1px;height:246.0px"></div>
<div class="vl" style="left:263.4px;height:246.0px"></div>
<div class="vl" style="left:305.8px;height:246.0px"></div>
<div class="vl" style="left:355.4px;height:246.0px"></div>
<div class="vl" style="left:405.2px;height:246.0px"></div>
<div class="vl" style="left:460.8px;height:246.0px"></div>
<div class="vl" style="left:525.8px;height:246.0px"></div>
<div class="vl" style="left:584.5px;height:246.0px"></div>
<div class="vl" style="left:644.0px;height:246.0px"></div>
<div style="left:1.4px;top:66.4px;width:2.3px;height:246.0px;background:linear-gradient(90deg,#b4c0d6,#ccd5e4)"></div>
<div style="left:3.7px;top:67.2px;width:9.4px;height:25px;background:linear-gradient(#ecf0f8,#f6f8fb 45%,#f8fafa)"></div>
<div style="left:689px;top:66.4px;width:10px;height:246.0px;background:#f1f6f6"></div>
<svg style="left:691.4px;top:70.7px" width="4.4" height="2.5" viewBox="0 0 4.4 2.5"><path d="M0 2.5H4.4L2.2 0Z" fill="#4a64a0"/></svg>
<div style="left:689.1px;top:77.1px;width:8.7px;height:4.8px;border:0.7px solid #b4bdd2;border-radius:1.3px;background:linear-gradient(90deg,#f6f8fb,#d6dce8)"></div>
<div style="left:691.9px;top:78.3px;width:4.1px;height:2.4px;background:#4a5a88"></div>
<svg style="left:691px;top:306.1px" width="4.8" height="2.8" viewBox="0 0 4.8 2.8"><path d="M0 0H4.8L2.4 2.8Z" fill="#5878ae"/></svg>
<div style="left:1.4px;top:312.4px;width:697.6px;height:9.4px;background:#f2f7f9;border-top:0.6px solid #dfe7ef"></div>
<div style="left:12.1px;top:312.8px;width:333.4px;height:8.6px;border:0.8px solid #b9c8dc;border-radius:1.5px;background:linear-gradient(#f6f9fc,#dde7f2)"></div>
<svg style="left:6px;top:315.3px" width="2.4" height="4.2" viewBox="0 0 2.4 4.2"><path d="M2.4 0V4.2L0 2.1Z" fill="#3c4f7c"/></svg>
<svg style="left:682.4px;top:315.3px" width="2.4" height="4.2" viewBox="0 0 2.4 4.2"><path d="M0 0V4.2L2.4 2.1Z" fill="#3c4f7c"/></svg>
<div style="left:178px;top:316px;width:2px;height:3px;background:#46609c"></div>
<div style="left:1.4px;top:321.8px;width:697.6px;height:4.2px;background:#f6f8f6;border-top:0.8px solid #e3e8ec"></div>
<div style="left:1.4px;top:325.5px;width:180.3px;height:154px;background:#f9fcf9"></div>
<div style="left:13px;top:326.8px;width:164.8px;height:12.5px;background:linear-gradient(#f4f5f5,#e6e8e8);border:0.7px solid #e0e3e3;border-radius:1.8px"></div>
<svg style="left:4.3px;top:331px" width="4.2" height="4.2" viewBox="0 0 4.2 4.2"><path d="M4.2 0V4.2H0Z" fill="#1c2c58"/></svg>
<div style="left:8.5px;top:332.3px;width:5px;height:0.7px;background:#a8acac"></div>
<div style="left:19.3px;top:339.2px;width:0.7px;height:22px;background:#e2e5e5"></div>
<div class="t" style="top:328.30px;font-size:6.40px;color:#222;letter-spacing:-0.064px;left:16.40px;">classifyVoxel [CUDA Launch]</div>
<svg style="left:17.3px;top:345.4px" width="3.5" height="5" viewBox="0 0 3.5 5"><path d="M0 0V5L3.5 2.5Z" fill="#1c2c58"/></svg>
<div style="left:20.8px;top:347.6px;width:4.6px;height:0.7px;background:#b4b8b8"></div>
<div class="t" style="top:342.90px;font-size:6.40px;color:#222;letter-spacing:-0.053px;left:27.70px;">classifyVoxel [CUDA Kernel]</div>
<svg style="left:17.3px;top:359.5px" width="3.5" height="5" viewBox="0 0 3.5 5"><path d="M0 0V5L3.5 2.5Z" fill="#1c2c58"/></svg>
<div style="left:20.8px;top:361.7px;width:4.6px;height:0.7px;background:#b4b8b8"></div>
<div class="t" style="top:357.00px;font-size:6.40px;color:#222;letter-spacing:-0.049px;left:27.70px;">Experiment Results</div>
<div style="left:181.7px;top:326px;width:506.4px;height:15px;background:linear-gradient(#4b6085,#3b5376)"></div>
<div class="t" style="top:329.70px;font-size:7.30px;color:#fff;letter-spacing:-0.274px;left:185.00px;">Time Range</div>
<div style="left:181.7px;top:373px;width:506.4px;height:16px;background:linear-gradient(#4b6085,#3b5376)"></div>
<div class="t" style="top:377.70px;font-size:7.30px;color:#fff;letter-spacing:-0.484px;left:185.00px;">CUDA</div>
<div class="t" style="top:342.60px;font-size:7.00px;color:#222;letter-spacing:-0.107px;left:187.10px;">Start</div>
<div class="t" style="top:342.60px;font-size:7.00px;color:#222;letter-spacing:-0.008px;left:278.80px;">91141.037</div>
<div class="t" style="top:352.00px;font-size:7.00px;color:#222;left:187.10px;">End</div>
<div class="t" style="top:352.00px;font-size:7.00px;color:#222;left:278.80px;">92634.95</div>
<div class="t" style="top:361.80px;font-size:7.00px;color:#222;letter-spacing:0.068px;left:187.10px;">Duration</div>
<div class="t" style="top:361.80px;font-size:7.00px;color:#222;left:278.80px;">1,494 µs</div>
<div class="t" style="top:390.60px;font-size:7.00px;color:#222;letter-spacing:-0.057px;left:187.10px;">Context ID</div>
<div class="t" style="top:390.60px;font-size:7.00px;color:#222;left:278.80px;">1</div>
<div class="t" style="top:399.90px;font-size:7.00px;color:#222;left:187.10px;">Stream ID</div>
<div class="t" style="top:399.90px;font-size:7.00px;color:#222;left:278.80px;">1</div>
<div class="t" style="top:409.30px;font-size:7.00px;color:#222;left:187.10px;">API Call ID</div>
<div class="t" style="top:409.30px;font-size:7.00px;color:#222;left:278.80px;">185</div>
<div class="t" style="top:418.80px;font-size:7.00px;color:#222;left:187.10px;">Signature</div>
<div class="t" style="top:418.80px;font-size:7.00px;color:#222;letter-spacing:0.035px;left:278.80px;">classifyVoxel(unsigned int*, unsigned int*, unsigned char*, uint3, uint3, uint3, unsigned int, float3, float)</div>
<div class="t" style="top:428.20px;font-size:7.00px;color:#222;left:187.10px;">Occupancy</div>
<div class="t" style="top:428.20px;font-size:7.00px;color:#222;left:278.80px;">0.67</div>
<div class="t" style="top:437.60px;font-size:7.00px;color:#222;left:187.10px;">GridDim</div>
<div class="t" style="top:437.60px;font-size:7.00px;color:#222;left:278.80px;">256, 1, 1</div>
<div class="t" style="top:447.00px;font-size:7.00px;color:#222;left:187.10px;">BlockDim</div>
<div class="t" style="top:447.00px;font-size:7.00px;color:#222;left:278.80px;">128, 1, 1</div>
<div class="t" style="top:456.40px;font-size:7.00px;color:#222;left:187.10px;">Regs/Thread</div>
<div class="t" style="top:456.40px;font-size:7.00px;color:#222;left:278.80px;">24</div>
<div class="t" style="top:465.80px;font-size:7.00px;color:#222;left:187.10px;">StatShm/Block</div>
<div class="t" style="top:465.80px;font-size:7.00px;color:#222;left:278.80px;">0</div>
<div class="t" style="top:475.20px;font-size:7.00px;color:#222;left:187.10px;">DynShm/Block</div>
<div class="t" style="top:475.20px;font-size:7.00px;color:#222;left:278.80px;">0</div>
<div style="left:688.1px;top:325.5px;width:10.6px;height:154px;background:#eaedea"></div>
<svg style="left:691.8px;top:329px" width="3.4" height="2.2" viewBox="0 0 3.4 2.2"><path d="M0 2.2H3.4L1.7 0Z" fill="#555"/></svg>
<svg style="left:691.8px;top:473.2px" width="3.4" height="2.2" viewBox="0 0 3.4 2.2"><path d="M0 0H3.4L1.7 2.2Z" fill="#555"/></svg>
<div style="left:689.6px;top:334.6px;width:8.2px;height:95px;border:0.8px solid #a4a7a4;border-radius:1.5px;background:linear-gradient(90deg,#f4f5f4,#d9dbd9)"></div>
<div style="left:692.2px;top:379.6px;width:3.6px;height:0.7px;background:#333"></div>
<div style="left:692.2px;top:381.2px;width:3.6px;height:0.7px;background:#333"></div>
<div style="left:692.2px;top:382.8px;width:3.6px;height:0.7px;background:#333"></div>
<div style="left:-4px;top:14.2px;width:5.2px;height:473px;background:#283650"></div>
<div style="left:698px;top:-4px;width:6px;height:491px;background:linear-gradient(90deg,#46536c 0,#283650 1px)"></div>
<div style="left:1px;top:479px;width:697.7px;height:2.6px;background:linear-gradient(#f9f5df,#fdefc0)"></div>
<div style="left:-4px;top:481.5px;width:708px;height:5.5px;background:#283650"></div>
</div></div></body></html>
